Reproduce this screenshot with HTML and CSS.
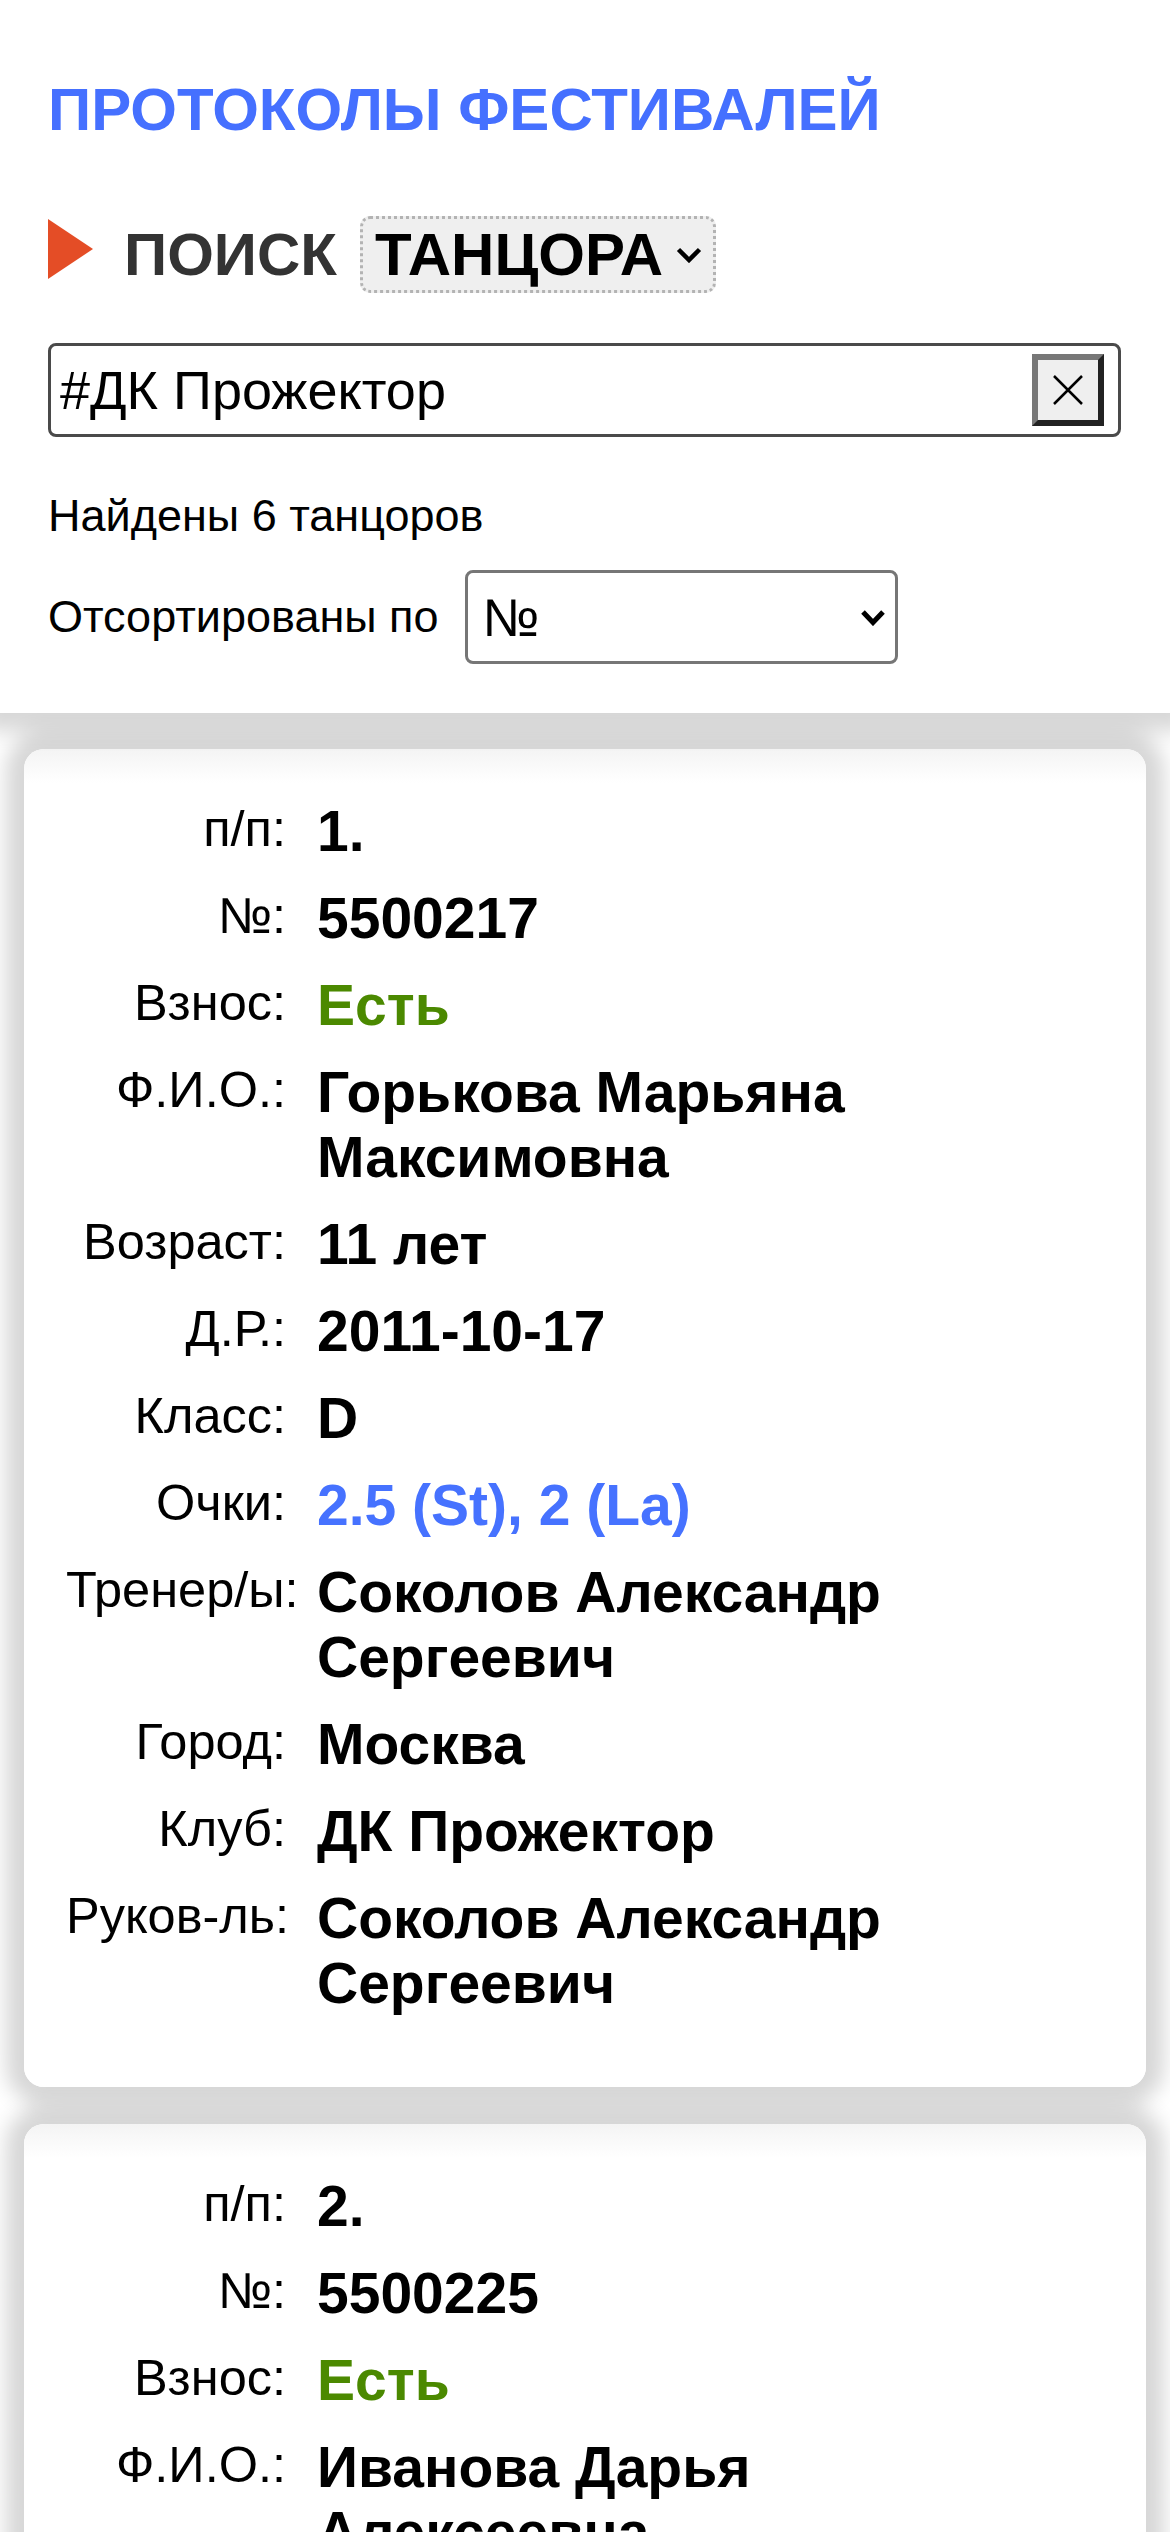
FILE: index.html
```html
<!DOCTYPE html>
<html lang="ru">
<head>
<meta charset="utf-8">
<title>Протоколы фестивалей</title>
<link rel="stylesheet" href="styles.css">
</head>
<body>
<header class="top">
  <h1 class="title">ПРОТОКОЛЫ ФЕСТИВАЛЕЙ</h1>
  <div class="search-head">
    <span class="tri"></span>
    <span class="search-word">ПОИСК</span>
    <label class="mode">
      <select class="mode-select"><option>ТАНЦОРА</option><option>ПАРЫ</option></select>
      <svg class="mode-chev" width="26" height="16" viewBox="0 0 26 16"><polyline points="2.5,2.5 13,13 23.5,2.5" fill="none" stroke="#000" stroke-width="4.5"/></svg>
    </label>
  </div>
  <div class="search-box">
    <input class="search-input" type="text" value="#ДК Прожектор">
    <button class="clear" type="button"><svg width="30" height="30" viewBox="0 0 30 30"><path d="M1 1L29 29M29 1L1 29" stroke="#000" stroke-width="2.5" fill="none"/></svg></button>
  </div>
  <p class="found">Найдены 6 танцоров</p>
  <div class="sort">
    <span class="sort-label">Отсортированы по</span>
    <label class="sort-sel">
      <select class="sort-select"><option>№</option><option>Ф.И.О.</option><option>Возраст</option></select>
      <svg class="sort-chev" width="26" height="17" viewBox="0 0 26 17"><polyline points="3,3 13,13.5 23,3" fill="none" stroke="#000" stroke-width="5"/></svg>
    </label>
  </div>
</header>

<main class="list">
  <section class="card">
    <div class="lbl">п/п:</div><div class="val">1.</div>
    <div class="lbl">№:</div><div class="val">5500217</div>
    <div class="lbl">Взнос:</div><div class="val green">Есть</div>
    <div class="lbl">Ф.И.О.:</div><div class="val">Горькова Марьяна Максимовна</div>
    <div class="lbl">Возраст:</div><div class="val">11 лет</div>
    <div class="lbl">Д.Р.:</div><div class="val">2011-10-17</div>
    <div class="lbl">Класс:</div><div class="val">D</div>
    <div class="lbl">Очки:</div><div class="val blue">2.5 (St), 2 (La)</div>
    <div class="lbl">Тренер/ы:</div><div class="val">Соколов Александр Сергеевич</div>
    <div class="lbl">Город:</div><div class="val">Москва</div>
    <div class="lbl">Клуб:</div><div class="val">ДК Прожектор</div>
    <div class="lbl">Руков-ль:</div><div class="val">Соколов Александр Сергеевич</div>
  </section>
  <section class="card">
    <div class="lbl">п/п:</div><div class="val">2.</div>
    <div class="lbl">№:</div><div class="val">5500225</div>
    <div class="lbl">Взнос:</div><div class="val green">Есть</div>
    <div class="lbl">Ф.И.О.:</div><div class="val">Иванова Дарья Алексеевна</div>
    <div class="lbl">Возраст:</div><div class="val">10 лет</div>
    <div class="lbl">Д.Р.:</div><div class="val">2012-03-05</div>
    <div class="lbl">Класс:</div><div class="val">D</div>
    <div class="lbl">Очки:</div><div class="val blue">1 (St), 1.5 (La)</div>
    <div class="lbl">Тренер/ы:</div><div class="val">Соколов Александр Сергеевич</div>
    <div class="lbl">Город:</div><div class="val">Москва</div>
    <div class="lbl">Клуб:</div><div class="val">ДК Прожектор</div>
    <div class="lbl">Руков-ль:</div><div class="val">Соколов Александр Сергеевич</div>
  </section>
</main>
</body>
</html>
```

FILE: styles.css
```css
html, body {
  margin: 0;
  padding: 0;
}
body {
  background: #ffffff;
  font-family: "Liberation Sans", Arial, sans-serif;
  color: #000;
}

.top {
  position: relative;
  z-index: 2;
  background: #fff;
  padding: 77px 49px 49px 48px;
  box-shadow: 0 0 20px 18px rgba(0, 0, 0, 0.16);
}

.title {
  margin: 0;
  font-size: 60px;
  line-height: 66px;
  font-weight: 700;
  color: #4570ff;
  white-space: nowrap;
}

.search-head {
  margin-top: 73px;
  display: flex;
  align-items: center;
  height: 77px;
}

.tri {
  flex: none;
  width: 0;
  height: 0;
  border-left: 45px solid #e44d26;
  border-top: 30px solid transparent;
  border-bottom: 30px solid transparent;
  margin-right: 31px;
  margin-bottom: 11px;
}

.search-word {
  font-size: 60px;
  font-weight: 700;
  color: #333;
  line-height: 77px;
  margin-right: 23px;
}

.mode {
  display: flex;
  align-items: center;
  box-sizing: border-box;
  height: 77px;
  border: 3px dotted #b3b3b3;
  border-radius: 10px;
  background: #efefef;
  padding: 0 11px 0 12px;
}

.mode-select {
  appearance: none;
  -webkit-appearance: none;
  border: 0;
  margin: 0;
  padding: 0;
  background: transparent;
  font-family: "Liberation Sans", Arial, sans-serif;
  font-size: 60px;
  font-weight: 700;
  color: #000;
  width: 287px;
  height: 71px;
  outline: none;
}

.mode-chev {
  margin-left: 14px;
  flex: none;
}

.search-box {
  margin-top: 50px;
  display: flex;
  align-items: center;
  box-sizing: border-box;
  height: 94px;
  border: 3px solid #4a4a4a;
  border-radius: 8px;
  background: #fff;
}

.search-input {
  flex: 1;
  min-width: 0;
  border: 0;
  outline: none;
  background: transparent;
  font-family: "Liberation Sans", Arial, sans-serif;
  font-size: 54px;
  color: #000;
  padding: 0 0 0 9px;
  margin: 0;
  height: 80px;
}

.clear {
  flex: none;
  display: flex;
  align-items: center;
  justify-content: center;
  box-sizing: border-box;
  width: 72px;
  height: 72px;
  margin: 0 14px 0 0;
  padding: 0;
  border-width: 6px;
  border-style: solid;
  border-color: #777 #222 #222 #777;
  background: #efefef;
}

.found {
  margin: 53px 0 0;
  font-size: 45px;
  line-height: normal;
}

.sort {
  margin-top: 28px;
  display: flex;
  align-items: center;
  height: 94px;
}

.sort-label {
  font-size: 45px;
  margin-right: 26px;
  white-space: nowrap;
}

.sort-sel {
  display: flex;
  align-items: center;
  box-sizing: border-box;
  width: 433px;
  height: 94px;
  border: 3px solid #767676;
  border-radius: 8px;
  background: #fff;
  padding: 0 9px 0 15px;
}

.sort-select {
  flex: 1;
  min-width: 0;
  appearance: none;
  -webkit-appearance: none;
  border: 0;
  margin: 0;
  padding: 0;
  background: transparent;
  font-family: "Liberation Sans", Arial, sans-serif;
  font-size: 53px;
  color: #000;
  height: 80px;
  outline: none;
}

.sort-chev {
  flex: none;
}

.list {
  display: flex;
  flex-direction: column;
  gap: 37px;
  padding: 36px 24px 40px;
}

.card {
  position: relative;
  display: grid;
  grid-template-columns: 220px 1fr;
  column-gap: 31px;
  background: linear-gradient(to bottom, #f4f4f4, #ffffff 34px);
  border-radius: 20px;
  padding: 39px 120px 60px 42px;
  box-shadow: 0 0 20px 18px rgba(0, 0, 0, 0.16);
}

.lbl {
  padding: 11px 0;
  font-size: 50.5px;
  line-height: 60px;
  text-align: right;
  white-space: nowrap;
}

.val {
  padding: 11px 0;
  font-size: 57px;
  line-height: 65px;
  font-weight: 700;
}

.green {
  color: #4b8900;
}

.blue {
  color: #4672ff;
}
```
